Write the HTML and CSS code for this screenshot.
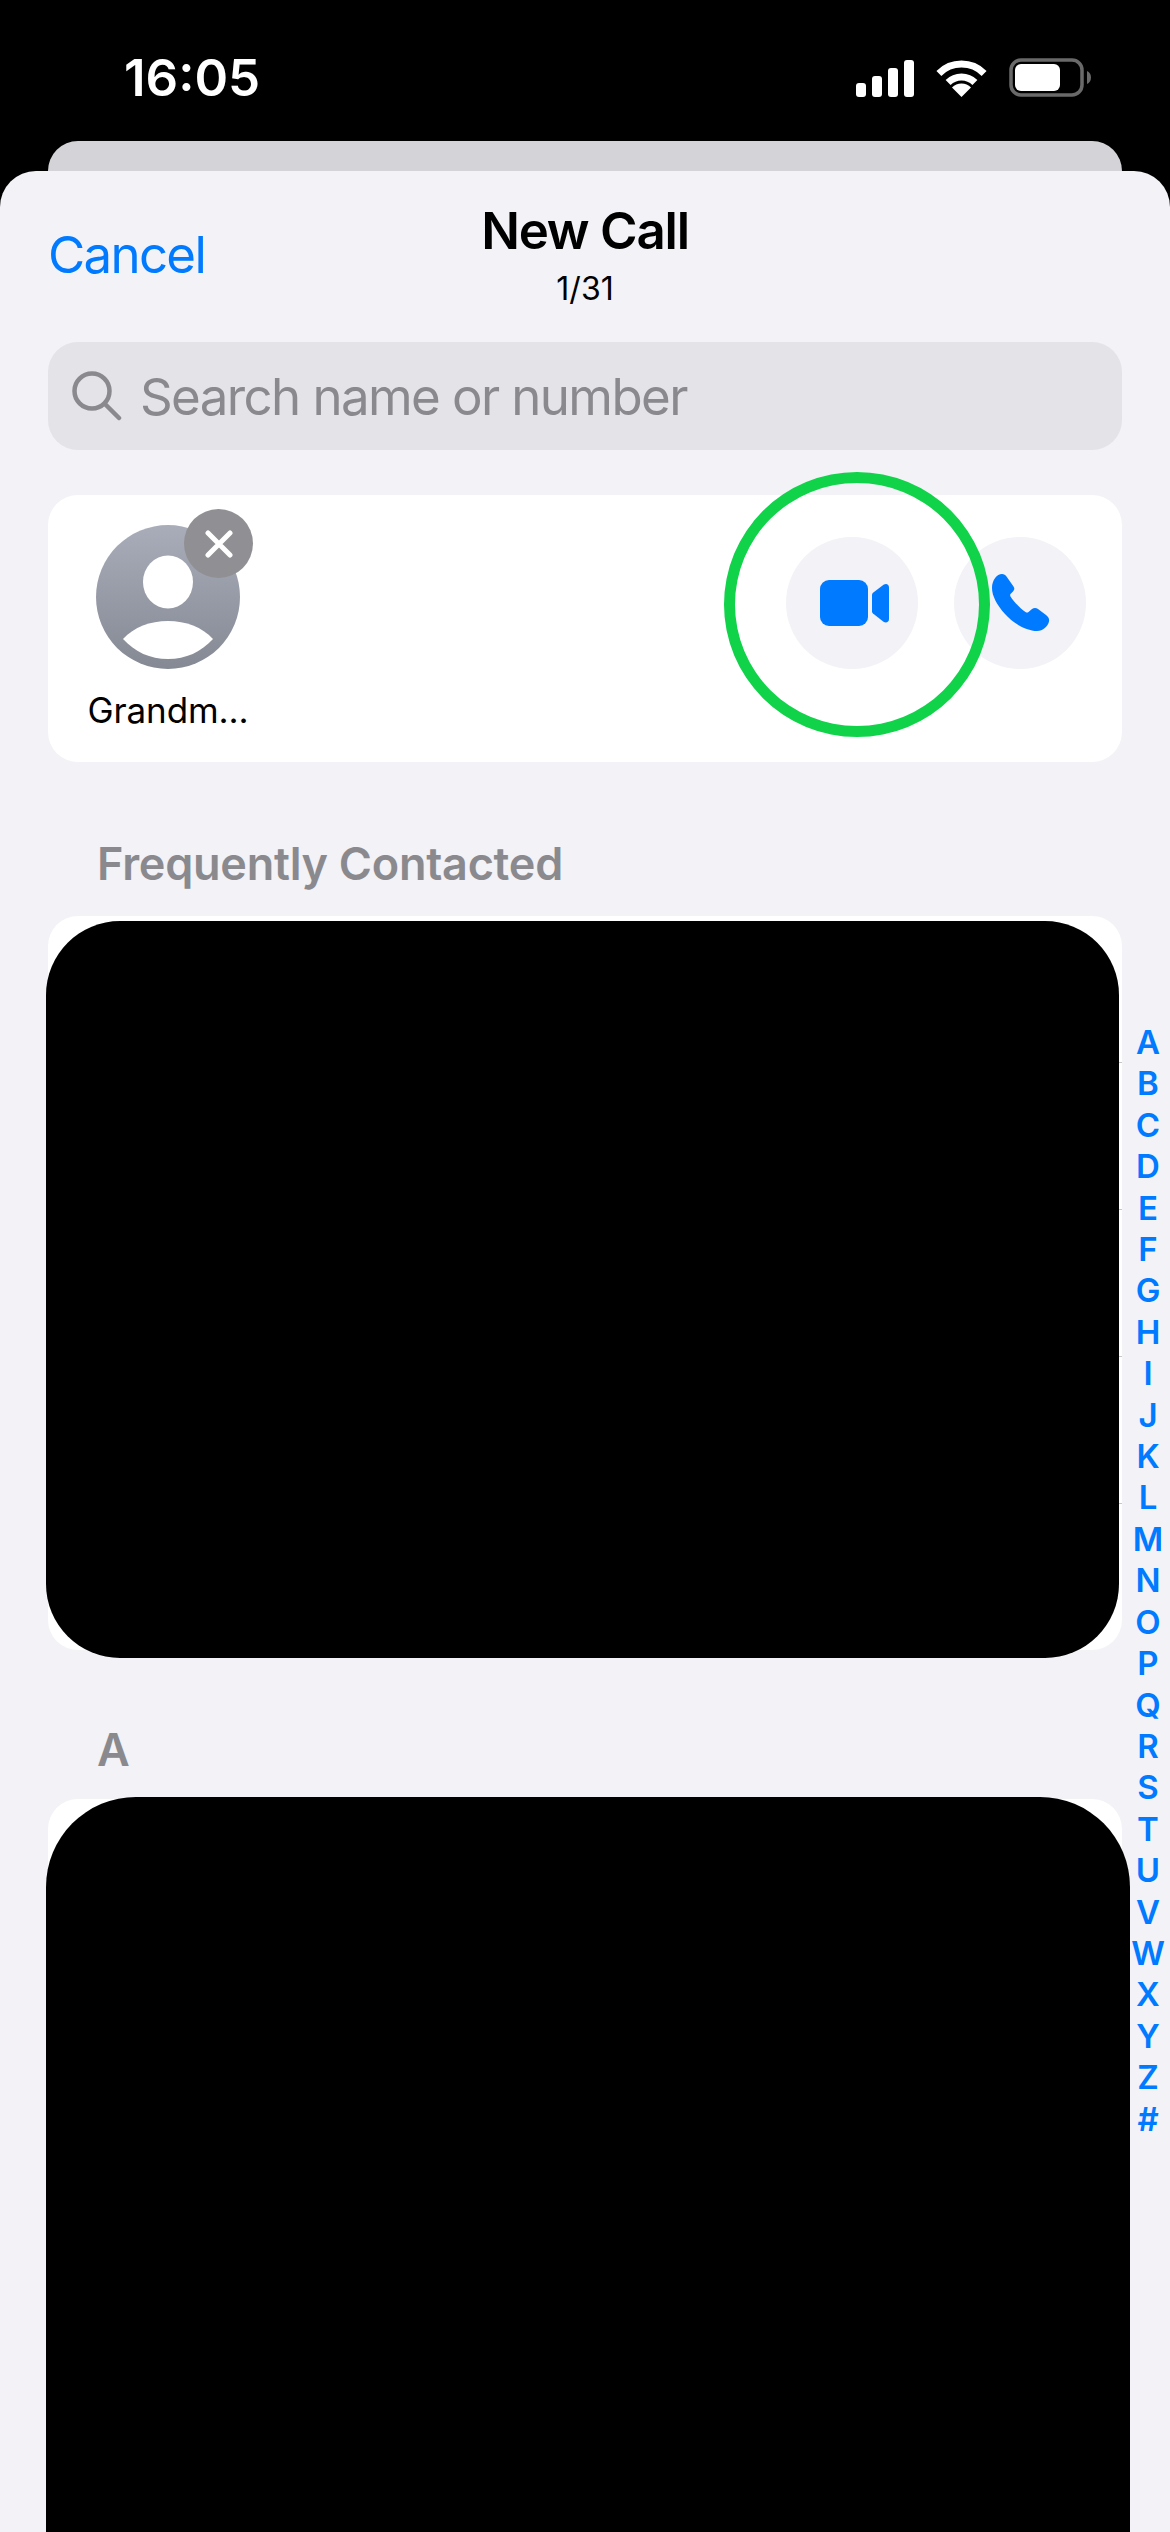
FILE: index.html
```html
<!DOCTYPE html>
<html lang="en">
<head>
    <meta charset="UTF-8">
    <meta name="viewport" content="width=device-width, initial-scale=1.0">
    <title>New Call</title>
    <link rel="stylesheet" href="styles.css">
</head>
<body>

<div class="status-bar">
    <span class="time">16:05</span>
    <div class="status-icons">
        <svg width="58" height="37" viewBox="0 0 58 37" fill="#fff">
            <rect x="0" y="23" width="10" height="14" rx="3"/>
            <rect x="16" y="16" width="10" height="21" rx="3"/>
            <rect x="32" y="8" width="10" height="29" rx="3"/>
            <rect x="48" y="0" width="10" height="37" rx="3"/>
        </svg>
        <svg width="51" height="37" viewBox="0 0 51 37" fill="none">
            <path d="M2.9 13.4A32 32 0 0 1 48.1 13.4" stroke="#fff" stroke-width="7"/>
            <path d="M12.1 22.6A19 19 0 0 1 38.9 22.6" stroke="#fff" stroke-width="7"/>
            <path d="M25.5 37L16 27.5A13.4 13.4 0 0 1 35 27.5Z" fill="#fff"/>
        </svg>
        <svg width="82" height="39" viewBox="0 0 82 39" fill="none">
            <rect x="2" y="2" width="71" height="35" rx="10" stroke="#696969" stroke-width="3.5"/>
            <rect x="6" y="6" width="45" height="27" rx="6" fill="#fff"/>
            <path d="M78 13C80.500 14 82 16.500 82 19.500C82 22.500 80.500 25 78 26Z" fill="#696969"/>
        </svg>
    </div>
</div>

<div class="back-card"></div>

<div class="sheet">
    <div class="header">
        <a class="cancel">Cancel</a>
        <div class="title-box">
            <div class="title">New Call</div>
            <div class="subtitle">1/31</div>
        </div>
    </div>

    <div class="search">
        <svg width="50" height="50" viewBox="0 0 50 50" fill="none" stroke="#8a8a8e" stroke-width="4.500" stroke-linecap="round">
            <circle cx="20" cy="20" r="17.500"/>
            <path d="M33 33L47 47"/>
        </svg>
        <span>Search name or number</span>
    </div>

    <div class="selected-card">
        <div class="contact">
            <div class="avatar">
                <svg width="144" height="144" viewBox="0 0 144 144">
                    <defs>
                        <linearGradient id="avatarFill" x1="0" y1="0" x2="0" y2="1">
                            <stop offset="0" stop-color="#a9adb9"/>
                            <stop offset="1" stop-color="#858994"/>
                        </linearGradient>
                    </defs>
                    <circle cx="72" cy="72" r="72" fill="url(#avatarFill)"/>
                    <ellipse cx="72" cy="57" rx="25" ry="26.500" fill="#fff"/>
                    <path d="M27 114C38 102 54 96 72 96C90 96 106 102 117 114C105 127 90 134 72 134C54 134 39 127 27 114Z" fill="#fff"/>
                </svg>
                <div class="remove">
                    <svg width="28" height="28" viewBox="0 0 28 28" stroke="#fff" stroke-width="5" stroke-linecap="round">
                        <path d="M3 3L25 25M25 3L3 25"/>
                    </svg>
                </div>
            </div>
            <div class="contact-name">Grandm...</div>
        </div>
        <div class="actions">
            <div class="action-btn video">
                <svg width="70" height="46" viewBox="0 0 70 46" fill="#007aff">
                    <rect x="0" y="0" width="48" height="46" rx="9"/>
                    <path d="M52 15C52 14 52.400 13.300 53 12.800L63.500 4.800C66 3 69 4 69 7.500V39C69 42 66 43.500 63.500 41.700L53 33.500C52.400 33 52 32.300 52 31.300Z"/>
                </svg>
            </div>
            <div class="action-btn phone">
                <svg width="58" height="58" viewBox="0 0 58 58" fill="#007aff">
                    <path d="M0 14C0 6 5 0 10 0C12 0 13.500 1 14.500 2.500L21.500 12.500C22.800 14.500 22.500 16 21 17.500L18.500 20C18 20.500 18 21.500 18.500 22.500C21 27 29 35 33.500 38C34.500 38.700 35.700 38.700 36.500 38L40 35C42 33.500 44 33.500 46 35L54 41C56.500 43 57.500 45 57 47.500C56 52 51 57 45 57C35 57 22 50 13 40C5 31 0 22 0 14Z"/>
                </svg>
            </div>
        </div>
        <div class="ring"></div>
    </div>

    <div class="section-title first">Frequently Contacted</div>
    <div class="list-card frequent">
        <div class="redacted"></div>
    </div>

    <div class="section-title second">A</div>
    <div class="list-card all">
        <div class="redacted"></div>
    </div>

    <div class="index" id="letterIndex"></div>
</div>

<script>
    // side index letters
    const letterIndex = document.getElementById('letterIndex');
    'ABCDEFGHIJKLMNOPQRSTUVWXYZ#'.split('').forEach(letter => {
        const item = document.createElement('span');
        item.innerText = letter;
        letterIndex.appendChild(item);
    });
</script>

</body>
</html>
```

FILE: styles.css
```css
* {
    box-sizing: border-box;
}
body {
    margin: 0;
    height: 2532px;
    overflow: hidden;
    background-color: #000;
    font-family: Inter, "Liberation Sans", sans-serif;
}
.status-bar {
    height: 141px;
    padding: 58px 79px 0 124px;
    display: flex;
    justify-content: space-between;
    align-items: flex-start;
    color: #fff;
}
.time {
    font-size: 51px;
    font-weight: 600;
    line-height: 40px;
}
.status-icons {
    display: flex;
    gap: 22px;
    align-items: flex-end;
    height: 39px;
}
.back-card {
    height: 30px;
    margin: 0 48px;
    background-color: #d3d3d8;
    border-radius: 30px 30px 0 0;
}
.sheet {
    position: relative;
    height: 2361px;
    overflow: hidden;
    background-color: #f2f2f7;
    border-radius: 36px 36px 0 0;
}
.header {
    display: flex;
    height: 171px;
    padding: 29px 48px 0;
    position: relative;
}
.cancel {
    font-size: 51px;
    line-height: 61px;
    letter-spacing: -1.7px;
    margin-top: 24px;
    color: #007aff;
}
.title-box {
    position: absolute;
    left: 0;
    right: 0;
    text-align: center;
}
.title {
    font-size: 51px;
    font-weight: 600;
    line-height: 61px;
    letter-spacing: -1.2px;
    color: #000;
}
.subtitle {
    font-size: 32px;
    line-height: 38px;
    margin-top: 9px;
    color: #000;
}
.search {
    display: flex;
    align-items: center;
    gap: 18px;
    height: 108px;
    margin: 0 48px;
    padding-left: 24px;
    background-color: #e3e3e8;
    border-radius: 30px;
    font-size: 51px;
    letter-spacing: -1.6px;
    color: #8a8a8e;
}
.selected-card {
    position: relative;
    display: flex;
    justify-content: space-between;
    align-items: flex-start;
    height: 267px;
    margin: 45px 48px 0;
    padding: 30px 36px 0 48px;
    background-color: #fff;
    border-radius: 30px;
}
.contact {
    width: 144px;
    display: flex;
    flex-direction: column;
    align-items: center;
}
.avatar {
    position: relative;
    height: 144px;
}
.avatar svg {
    display: block;
}
.remove {
    position: absolute;
    left: 88px;
    top: -16px;
    width: 69px;
    height: 69px;
    display: flex;
    justify-content: center;
    align-items: center;
    border-radius: 50%;
    background-color: #908f93;
}
.contact-name {
    margin-top: 20px;
    font-size: 35px;
    line-height: 42px;
    letter-spacing: -0.1px;
    white-space: nowrap;
    color: #000;
}
.actions {
    display: flex;
    gap: 36px;
    margin-top: 12px;
}
.action-btn {
    width: 132px;
    height: 132px;
    display: flex;
    justify-content: center;
    align-items: center;
    border-radius: 50%;
    background-color: #f2f2f7;
}
.action-btn.video svg {
    margin-left: 6px;
}
.action-btn.phone svg {
    margin-left: 2px;
}
.ring {
    position: absolute;
    left: 676px;
    top: -23px;
    width: 266px;
    height: 265px;
    border: 11px solid #10d34a;
    border-radius: 50%;
}
.section-title {
    font-size: 45px;
    font-weight: 600;
    line-height: 54px;
    letter-spacing: -0.25px;
    padding-left: 97px;
    color: #8a8a8e;
}
.section-title.first {
    margin-top: 75px;
}
.section-title.second {
    margin-top: 73px;
}
.list-card {
    position: relative;
    margin: 0 48px;
    border-radius: 30px;
}
.list-card.frequent {
    height: 734px;
    margin-top: 25px;
    background: repeating-linear-gradient(#fff 0 146px, #c6c6c8 146px 147px);
}
.list-card.all {
    height: 900px;
    margin-top: 22px;
    background-color: #fff;
}
.redacted {
    position: absolute;
    background-color: #000;
}
.frequent .redacted {
    left: -2px;
    right: 3px;
    top: 5px;
    bottom: -8px;
    border-radius: 74px;
}
.all .redacted {
    left: -2px;
    right: -8px;
    top: -2px;
    bottom: 0;
    border-radius: 90px 90px 0 0;
}
.index {
    position: absolute;
    top: 851px;
    right: 0;
    width: 44px;
    display: flex;
    flex-direction: column;
    align-items: center;
    font-size: 33px;
    font-weight: 600;
    line-height: 41.400px;
    color: #007aff;
}
```
